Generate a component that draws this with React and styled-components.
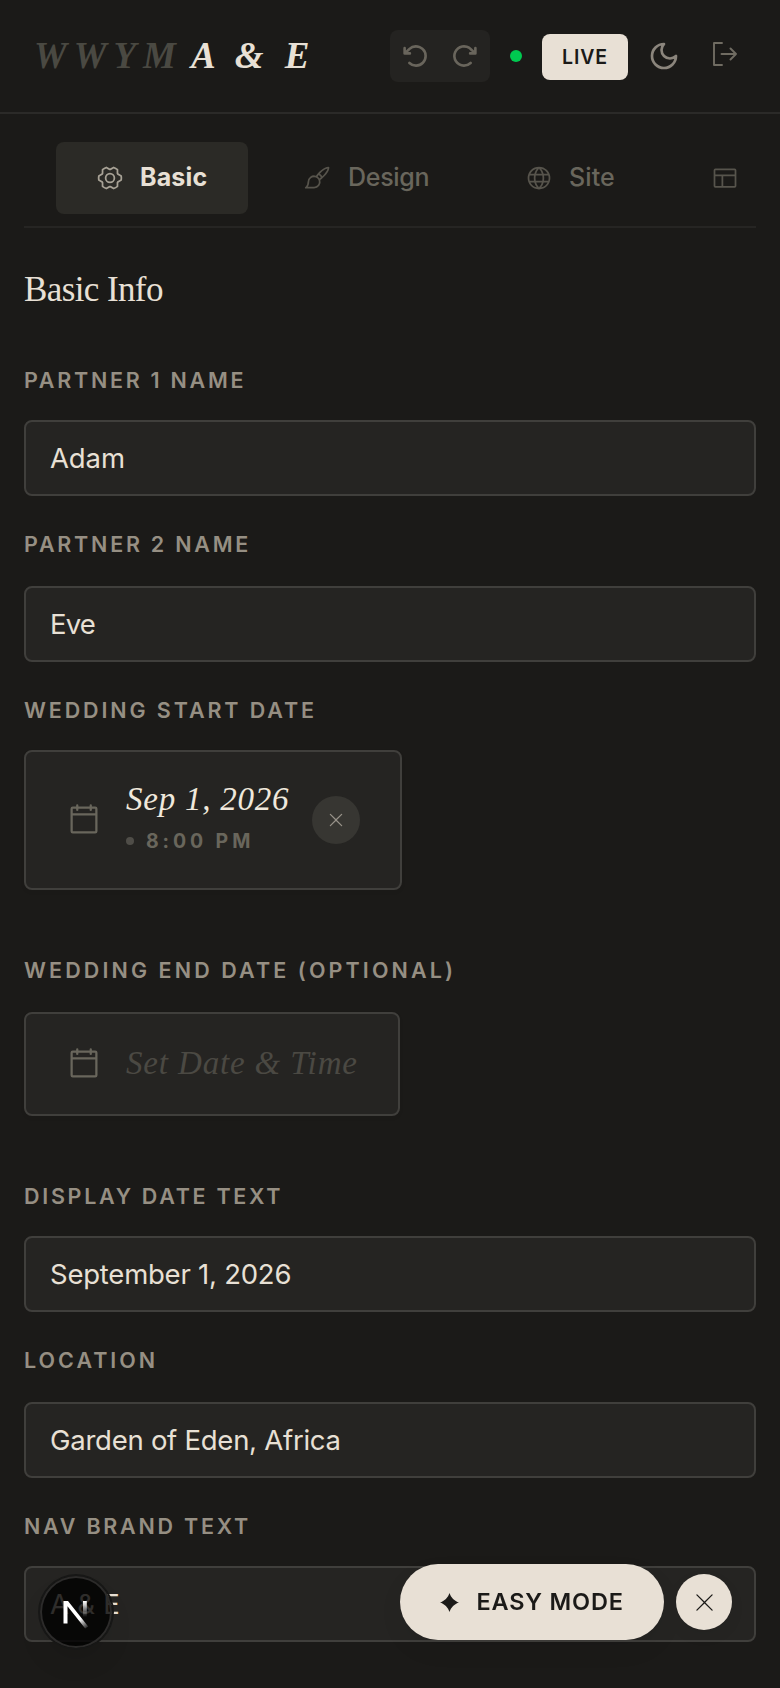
import React from 'react'
import styled, { createGlobalStyle } from 'styled-components'
import {
  PiArrowClockwiseBold,
  PiArrowCounterClockwiseBold,
  PiCalendarBlank,
  PiGearSix,
  PiGlobe,
  PiLayout,
  PiPaintBrush,
  PiX,
  PiXLight,
} from 'react-icons/pi'

const sans = `Inter, 'Liberation Sans', sans-serif`
const serif = `'Liberation Serif', serif`

const GlobalStyle = createGlobalStyle`
  * { box-sizing: border-box; }
  body {
    margin: 0;
    background: #1b1a18;
    color: #e8e0d5;
    font-family: ${sans};
  }
  button { font: inherit; border: 0; padding: 0; background: none; color: inherit; }
  svg { display: block; flex: none; }
`

const Page = styled.div`
  height: 1688px;
  overflow: hidden;
`

const Header = styled.header`
  display: flex;
  align-items: center;
  justify-content: space-between;
  height: 114px;
  padding: 0 40px 0 34px;
  border-bottom: 2px solid #2b2a28;
`

const Brand = styled.div`
  display: flex;
  gap: 8px;
  font: italic 700 37px/44px ${serif};
  letter-spacing: 6.9px;
  white-space: nowrap;
`

const BrandMuted = styled.span`
  color: #4a4942;
`

const BrandName = styled.span`
  letter-spacing: 5.1px;
  word-spacing: 1.8px;
`

const Actions = styled.div`
  display: flex;
  align-items: center;
`

const History = styled.div`
  display: flex;
  justify-content: space-between;
  align-items: center;
  width: 100px;
  height: 52px;
  padding: 0 12px;
  border-radius: 8px;
  background: #242321;
  color: #69655c;
`

const LiveDot = styled.span`
  width: 12px;
  height: 12px;
  margin: 0 20px;
  border-radius: 50%;
  background: #00c950;
`

const LiveButton = styled.button`
  width: 86px;
  height: 46px;
  margin-top: 2px;
  border-radius: 8px;
  background: #e8e0d5;
  color: #1b1a18;
  font-size: 19.5px;
  font-weight: 600;
  letter-spacing: 0.9px;
`

const IconButton = styled.button`
  margin: ${(p) => p.$margin};
  color: ${(p) => p.$color};
`

const Tabs = styled.nav`
  display: flex;
  align-items: flex-start;
  gap: 16px;
  height: 114px;
  margin: 0 24px;
  padding: 28px 0 0 32px;
  border-bottom: 2px solid #262523;
  overflow: hidden;
`

const Tab = styled.button`
  display: flex;
  flex: none;
  align-items: center;
  gap: 16px;
  width: ${(p) => p.$width}px;
  height: 72px;
  padding-left: 40px;
  border-radius: 8px;
  background: ${(p) => (p.$active ? '#2b2a26' : 'transparent')};
  color: ${(p) => (p.$active ? '#e8e0d5' : '#69665c')};
  font-size: 25px;
  font-weight: ${(p) => (p.$active ? 700 : 500)};
  letter-spacing: ${(p) => p.$track}px;
  white-space: nowrap;
  svg { color: ${(p) => (p.$active ? '#a8a296' : '#57544c')}; }
  span { margin-top: -2px; }
`

const Form = styled.main`
  padding: 0 24px;
`

const Title = styled.h2`
  margin: 0;
  padding-top: 40px;
  height: 132px;
  font: 400 35px/44px ${serif};
  letter-spacing: -0.6px;
`

const Field = styled.div`
  margin-bottom: ${(p) => p.$after}px;
`

const Label = styled.label`
  display: block;
  height: ${(p) => p.$height}px;
  color: #968f83;
  font-size: 21.5px;
  font-weight: 600;
  line-height: 40px;
  letter-spacing: ${(p) => p.$track}px;
  text-transform: uppercase;
  white-space: nowrap;
`

const Input = styled.div`
  height: 76px;
  padding: 0 24px;
  border: 2px solid #403f3c;
  border-radius: 8px;
  background: #252422;
  font-size: 27.5px;
  line-height: 72px;
  letter-spacing: ${(p) => p.$track}px;
`

const DateCard = styled.div`
  display: flex;
  align-items: center;
  width: ${(p) => p.$width}px;
  height: ${(p) => p.$height}px;
  padding: 0 40px;
  border: 2px solid #403f3c;
  border-radius: 8px;
  background: #252422;
  box-shadow: 0 2px 4px rgba(0, 0, 0, 0.05);
  > svg { color: #69665c; }
`

const DateInfo = styled.div`
  width: 186px;
  margin: 0 0 ${(p) => p.$lift}px 24px;
`

const DateText = styled.div`
  font: italic 400 33px/40px ${serif};
  letter-spacing: ${(p) => p.$track}px;
  color: ${(p) => (p.$empty ? '#4b4943' : '#f0e8dc')};
  white-space: nowrap;
`

const Time = styled.div`
  display: flex;
  align-items: center;
  gap: 12px;
  height: 28px;
  margin-top: 8px;
  color: #69665c;
  font-size: 19.5px;
  font-weight: 700;
  letter-spacing: 3.9px;
  &::before {
    content: '';
    width: 8px;
    height: 8px;
    border-radius: 50%;
    background: #4f4d48;
  }
`

const Clear = styled.button`
  display: grid;
  place-items: center;
  width: 48px;
  height: 48px;
  border-radius: 50%;
  background: #373632;
  color: #98938a;
`

const NextBadge = styled.div`
  position: fixed;
  left: 40px;
  top: 1576px;
  width: 72px;
  height: 72px;
  border-radius: 50%;
  background: rgba(0, 0, 0, 0.8);
  box-shadow: inset 0 0 0 2px #2c2b2a, 0 0 0 2px #171716, 0 16px 32px -8px rgba(0, 0, 0, 0.12);
`

const Floating = styled.div`
  position: fixed;
  left: 400px;
  top: 1564px;
  display: flex;
  align-items: center;
  gap: 12px;
`

const EasyButton = styled.button`
  display: flex;
  align-items: center;
  gap: 17.5px;
  width: 264px;
  height: 76px;
  padding-left: 40px;
  border-radius: 38px;
  background: #e8e0d5;
  color: #1b1a18;
  font-size: 23.5px;
  font-weight: 600;
  letter-spacing: 0.8px;
  white-space: nowrap;
  box-shadow: 0 10px 24px rgba(0, 0, 0, 0.06);
  span { margin-top: -2px; }
`

const Dismiss = styled.button`
  display: grid;
  place-items: center;
  width: 56px;
  height: 56px;
  border-radius: 50%;
  background: #e8e0d5;
  color: #1b1a18;
  box-shadow: 0 6px 16px rgba(0, 0, 0, 0.05);
`

const MoonIcon = () => (
  <svg width="32" height="32" viewBox="0 0 24 24" fill="none" stroke="currentColor" strokeWidth="2" strokeLinecap="round" strokeLinejoin="round">
    <path d="M12 3a6 6 0 0 0 9 9 9 9 0 1 1-9-9Z" />
  </svg>
)

const SignOutIcon = () => (
  <svg width="24" height="24" viewBox="0 0 24 24" fill="none" stroke="currentColor" strokeWidth="1.9" strokeLinecap="round" strokeLinejoin="round">
    <path d="M9 1H1V23H9" />
    <path d="M8.5 12H23M17.5 6.5L23 12L17.5 17.5" />
  </svg>
)

const SparkIcon = () => (
  <svg width="19" height="19" viewBox="0 0 19 19" fill="currentColor">
    <path d="M9.5 0C10.8 4.4 14.6 8.2 19 9.5C14.6 10.8 10.8 14.6 9.5 19C8.2 14.6 4.4 10.8 0 9.5C4.4 8.2 8.2 4.4 9.5 0Z" />
  </svg>
)

const NextLogo = () => (
  <svg width="72" height="72" viewBox="0 0 72 72" fill="none">
    <defs>
      <linearGradient id="diag" x1="36" y1="38" x2="48" y2="53" gradientUnits="userSpaceOnUse">
        <stop offset="0.35" stopColor="#fff" />
        <stop offset="1" stopColor="#fff" stopOpacity="0" />
      </linearGradient>
      <linearGradient id="stem" x1="45" y1="25" x2="45" y2="41" gradientUnits="userSpaceOnUse">
        <stop stopColor="#fff" />
        <stop offset="1" stopColor="#fff" stopOpacity="0" />
      </linearGradient>
    </defs>
    <rect x="43" y="25" width="3.8" height="16" fill="url(#stem)" />
    <path d="M23.5 25H28L48.2 50.4L45.2 52.6L27.5 30.2V47.5H23.5Z" fill="url(#diag)" />
  </svg>
)

const App = () => {
  return (
    <Page>
      <GlobalStyle />
      <Header>
        <Brand>
          <BrandMuted>WWYM</BrandMuted>
          <BrandName>A &amp; E</BrandName>
        </Brand>
        <Actions>
          <History>
            <PiArrowCounterClockwiseBold size={28} />
            <PiArrowClockwiseBold size={28} />
          </History>
          <LiveDot />
          <LiveButton>LIVE</LiveButton>
          <IconButton $margin="0 0 0 20px" $color="#8b857c"><MoonIcon /></IconButton>
          <IconButton $margin="-4px 3px 0 33px" $color="#706c62"><SignOutIcon /></IconButton>
        </Actions>
      </Header>
      <Tabs>
        <Tab $active $width={192} $track={0.15}><PiGearSix size={28} /><span>Basic</span></Tab>
        <Tab $width={205} $track={-0.3}><PiPaintBrush size={28} /><span>Design</span></Tab>
        <Tab $width={170} $track={0.1}><PiGlobe size={28} /><span>Site</span></Tab>
        <Tab $width={80} $track={0}><PiLayout size={28} /></Tab>
      </Tabs>
      <Form>
        <Title>Basic Info</Title>
        <Field $after={28}>
          <Label $height={60} $track={2.72}>Partner 1 Name</Label>
          <Input $track={-0.1}>Adam</Input>
        </Field>
        <Field $after={28}>
          <Label $height={62} $track={2.76}>Partner 2 Name</Label>
          <Input $track={-0.8}>Eve</Input>
        </Field>
        <Field $after={60}>
          <Label $height={60} $track={2.88}>Wedding Start Date</Label>
          <DateCard $width={378} $height={140}>
            <PiCalendarBlank size={36} />
            <DateInfo $lift={6}>
              <DateText $track={0.75}>Sep 1, 2026</DateText>
              <Time>8:00 PM</Time>
            </DateInfo>
            <Clear><PiX size={20} /></Clear>
          </DateCard>
        </Field>
        <Field $after={60}>
          <Label $height={62} $track={3.1}>Wedding End Date (Optional)</Label>
          <DateCard $width={376} $height={104}>
            <PiCalendarBlank size={36} />
            <DateInfo $lift={2}>
              <DateText $empty $track={0.85}>Set Date &amp; Time</DateText>
            </DateInfo>
          </DateCard>
        </Field>
        <Field $after={28}>
          <Label $height={60} $track={2.7}>Display Date Text</Label>
          <Input $track={-0.23}>September 1, 2026</Input>
        </Field>
        <Field $after={28}>
          <Label $height={62} $track={3}>Location</Label>
          <Input $track={-0.26}>Garden of Eden, Africa</Input>
        </Field>
        <Field $after={0}>
          <Label $height={60} $track={2.75}>Nav Brand Text</Label>
          <Input $track={0.3}>A &amp; E</Input>
        </Field>
      </Form>
      <NextBadge><NextLogo /></NextBadge>
      <Floating>
        <EasyButton><SparkIcon /><span>EASY MODE</span></EasyButton>
        <Dismiss><PiXLight size={27} /></Dismiss>
      </Floating>
    </Page>
  )
}

export default App
